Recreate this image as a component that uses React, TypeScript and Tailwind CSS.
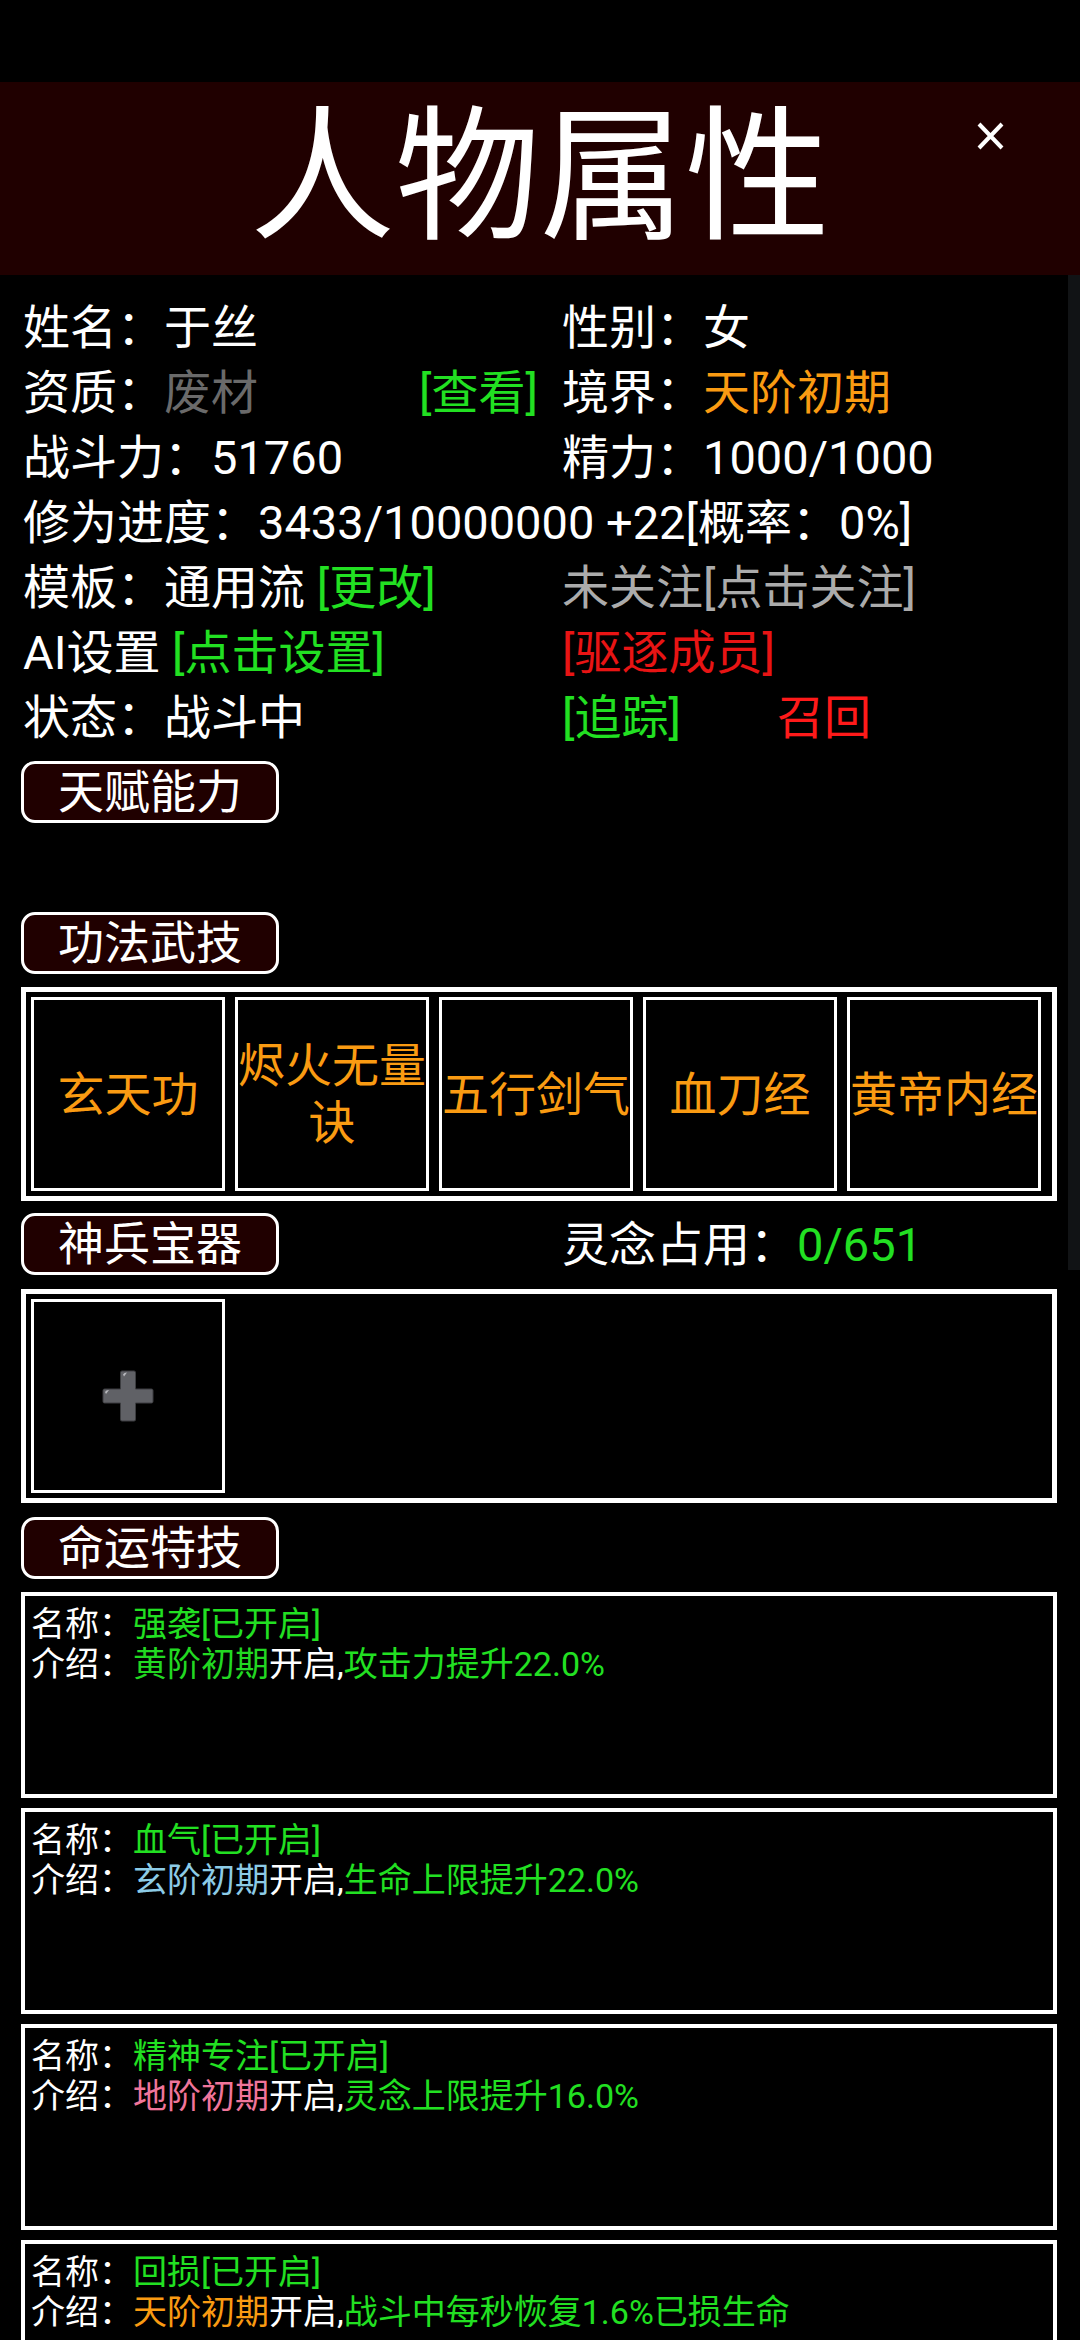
import React from "react";

const GREEN = "text-[#22e022]";
const ORANGE = "text-[#fa9b12]";

function SectionButton({ label }: { label: string }) {
  return (
    <div className="w-[258px] h-[62px] border-[3px] border-white rounded-[14px] bg-[#200000] flex items-center justify-center text-[46px] leading-none text-white shrink-0">
      {label}
    </div>
  );
}

function Row({ left, right }: { left: React.ReactNode; right?: React.ReactNode }) {
  return (
    <div className="grid grid-cols-[539px_1fr] h-[65px] items-center whitespace-nowrap">
      <div className="pr-[24px] flex items-center">{left}</div>
      <div className="flex items-center">{right}</div>
    </div>
  );
}

function PlusIcon() {
  return (
    <svg width="54" height="54" viewBox="0 0 54 54">
      <path
        d="M21 2h12a1.5 1.5 0 0 1 1.5 1.5V20h16a1.5 1.5 0 0 1 1.5 1.5v11a1.5 1.5 0 0 1-1.5 1.5h-16v16.5a1.5 1.5 0 0 1-1.5 1.5H21a1.5 1.5 0 0 1-1.5-1.5V34h-16A1.5 1.5 0 0 1 2 32.5v-11A1.5 1.5 0 0 1 3.5 20h16V3.5A1.5 1.5 0 0 1 21 2z"
        fill="#606166"
        stroke="#3c3d40"
        strokeWidth="1"
      />
      <path d="M22 5.5q1-2 4-2l-3 4z" fill="#b9babe" />
      <path d="M4 23q1-2 4-2l-3 4z" fill="#b9babe" />
    </svg>
  );
}

type Fate = {
  name: string;
  stage: string;
  stageColor: string;
  effect: string;
};

const fates: Fate[] = [
  { name: "强袭", stage: "黄阶初期", stageColor: "text-[#22d822]", effect: "攻击力提升22.0%" },
  { name: "血气", stage: "玄阶初期", stageColor: "text-[#8ccbe6]", effect: "生命上限提升22.0%" },
  { name: "精神专注", stage: "地阶初期", stageColor: "text-[#f0759a]", effect: "灵念上限提升16.0%" },
  { name: "回损", stage: "天阶初期", stageColor: "text-[#fa9b12]", effect: "战斗中每秒恢复1.6%已损生命" },
];

export default function App() {
  const skills = ["玄天功", "烬火无量诀", "五行剑气", "血刀经", "黄帝内经"];
  return (
    <div className="w-[1080px] h-[2340px] bg-black overflow-hidden relative text-white font-['Roboto','Noto_Sans_CJK_SC',sans-serif]">
      <div className="h-[82px]" />
      <div className="h-[193px] bg-[#200000] flex items-center justify-center relative">
        <span className="text-[145px] leading-none">人物属性</span>
        <svg className="absolute left-[976px] top-[40px]" width="29" height="28" viewBox="0 0 29 28">
          <path d="M3 2L26 26M26 2L3 26" stroke="white" strokeWidth="4" />
        </svg>
      </div>

      {/* scrollbar */}
      <div className="absolute right-0 top-[275px] w-[12px] h-[995px] bg-[#111315]" />

      <div className="pl-[23px] pt-[20px] text-[47px] leading-[65px]">
        <Row
          left={<span>姓名：于丝</span>}
          right={<span>性别：女</span>}
        />
        <Row
          left={
            <div className="flex w-full justify-between">
              <span>
                资质：<span className="text-[#6a6a6a]">废材</span>
              </span>
              <span className={GREEN}>[查看]</span>
            </div>
          }
          right={
            <span>
              境界：<span className={ORANGE}>天阶初期</span>
            </span>
          }
        />
        <Row left={<span>战斗力：51760</span>} right={<span>精力：1000/1000</span>} />
        <div className="h-[65px] flex items-center whitespace-nowrap">修为进度：3433/10000000 +22[概率：0%]</div>
        <Row
          left={
            <span>
              模板：通用流 <span className={GREEN}>[更改]</span>
            </span>
          }
          right={<span className="text-[#ababab]">未关注[点击关注]</span>}
        />
        <Row
          left={
            <span>
              AI设置 <span className={GREEN}>[点击设置]</span>
            </span>
          }
          right={<span className="text-[#e81414]">[驱逐成员]</span>}
        />
        <Row
          left={<span>状态：战斗中</span>}
          right={
            <>
              <span className={`${GREEN} inline-block w-[215px]`}>[追踪]</span>
              <span className="text-[#ff1a1a]">召回</span>
            </>
          }
        />
      </div>

      <div className="pl-[21px] flex flex-col">
        <div className="mt-[11px]">
          <SectionButton label="天赋能力" />
        </div>
        <div className="mt-[89px]">
          <SectionButton label="功法武技" />
        </div>

        <div className="mt-[13px] w-[1036px] h-[214px] border-[5px] border-white p-[5px] flex gap-[10px]">
          {skills.map((s) => (
            <div
              key={s}
              className={`w-[194px] h-[194px] border-[3px] border-white flex items-center justify-center text-center text-[47px] leading-[57px] ${ORANGE}`}
            >
              {s}
            </div>
          ))}
        </div>

        <div className="mt-[12px] flex items-center">
          <SectionButton label="神兵宝器" />
          <div className="ml-[283px] text-[47px] leading-none whitespace-nowrap">
            灵念占用：<span className={GREEN}>0/651</span>
          </div>
        </div>

        <div className="mt-[14px] w-[1036px] h-[214px] border-[5px] border-white p-[5px] flex">
          <div className="w-[194px] h-[194px] border-[3px] border-white flex items-center justify-center">
            <PlusIcon />
          </div>
        </div>

        <div className="mt-[14px]">
          <SectionButton label="命运特技" />
        </div>

        <div className="mt-[13px] flex flex-col gap-[10px]">
          {fates.map((f) => (
            <div
              key={f.name}
              className="w-[1036px] h-[206px] shrink-0 border-[4px] border-white px-[6px] pt-[8px] text-[34px] leading-[40px] whitespace-nowrap"
            >
              <div>
                名称：<span className={GREEN}>{f.name}[已开启]</span>
              </div>
              <div>
                介绍：<span className={f.stageColor}>{f.stage}</span>开启,
                <span className={GREEN}>{f.effect}</span>
              </div>
            </div>
          ))}
        </div>
      </div>
    </div>
  );
}
